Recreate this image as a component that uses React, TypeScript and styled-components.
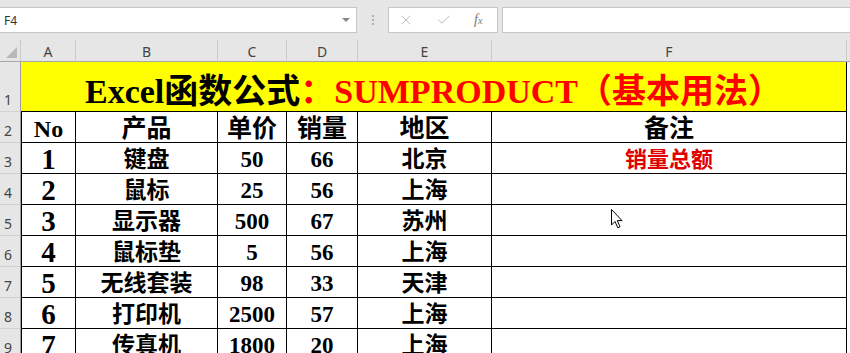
import React from 'react';
import styled, { createGlobalStyle } from 'styled-components';
import { X, Check } from 'lucide-react';

const GlobalStyle = createGlobalStyle`
  html, body {
    margin: 0;
    padding: 0;
    background: #fff;
    overflow: hidden;
  }
`;

const SERIF = `"Liberation Serif", "Noto Sans CJK SC", serif`;
const UI = `"Noto Sans", "Noto Sans CJK SC", sans-serif`;
const COLS = '21px 55px 142px 69px 71px 134px 355px 1fr';

const Page = styled.div`
  width: 850px;
  height: 353px;
  overflow: hidden;
  position: relative;
  background: #fff;
`;

const FormulaBar = styled.div`
  display: flex;
  align-items: flex-start;
  height: 40px;
  padding-top: 7px;
  box-sizing: border-box;
  background: #e6e6e6;
`;

const NameBox = styled.div`
  width: 357px;
  height: 26px;
  box-sizing: border-box;
  background: #fff;
  border: 1px solid #c6c6c6;
  border-left: none;
  display: flex;
  align-items: center;
  justify-content: space-between;
  padding: 0 6px 0 4px;
  font: 12px ${UI};
  color: #333;
`;

const DropArrow = styled.span`
  width: 0;
  height: 0;
  border-left: 4px solid transparent;
  border-right: 4px solid transparent;
  border-top: 4px solid #888;
`;

const Grip = styled.div`
  width: 31px;
  height: 26px;
  display: flex;
  flex-direction: column;
  align-items: center;
  justify-content: center;
  gap: 2px;
`;

const Dot = styled.span`
  width: 2px;
  height: 2px;
  background: #b0b0b0;
`;

const FxBox = styled.div`
  width: 110px;
  height: 26px;
  box-sizing: border-box;
  background: #fff;
  border: 1px solid #c6c6c6;
  display: flex;
  align-items: center;
  gap: 22px;
  padding-left: 9px;
  color: #bdbdbd;
`;

const Fx = styled.span`
  font: italic 14px ${SERIF};
  color: #777;
  sub {
    font-size: 10px;
    vertical-align: baseline;
  }
`;

const FormulaInput = styled.div`
  flex: 1;
  height: 26px;
  margin-left: 4px;
  box-sizing: border-box;
  background: #fff;
  border: 1px solid #c6c6c6;
  border-right: none;
`;

const Sheet = styled.div`
  display: grid;
  grid-template-columns: ${COLS};
  grid-template-rows: 22px 50px;
  grid-auto-rows: 31px;
`;

const ColHead = styled.div`
  background: #e6e6e6;
  border-right: 1px solid #cacaca;
  border-bottom: 1px solid #a8a8a8;
  display: flex;
  align-items: center;
  justify-content: center;
  font: 14px ${UI};
  color: #444;
  padding-top: 1px;
`;

const Corner = styled(ColHead)`
  position: relative;
  &::after {
    content: '';
    position: absolute;
    right: 3px;
    bottom: 3px;
    border-left: 11px solid transparent;
    border-bottom: 11px solid #b8b8b8;
  }
`;

const RowHead = styled.div`
  background: #e6e6e6;
  border-right: 1px solid #9e9e9e;
  border-bottom: 1px solid #d2d2d2;
  display: flex;
  align-items: flex-end;
  padding: 0 0 2px 4px;
  font: 14px ${UI};
  color: #444;
`;

const Title = styled.div`
  grid-column: 2 / 8;
  background: #ffff00;
  border-bottom: 1px solid #000;
  border-right: 1px solid #000;
  display: flex;
  align-items: center;
  justify-content: center;
  padding-top: 4px;
  font: bold 34px ${SERIF};
  color: #000;
  white-space: nowrap;
`;

const Red = styled.span`
  color: #ff0000;
`;

const Cell = styled.div<{ $size: number; $color?: string; $first?: boolean }>`
  border-right: 1px solid #000;
  border-bottom: 1px solid #000;
  ${(p) => (p.$first ? 'border-left: 1px solid #000;' : '')}
  display: flex;
  align-items: center;
  justify-content: center;
  padding-top: 3px;
  font: bold ${(p) => p.$size}px/1 ${SERIF};
  color: ${(p) => p.$color || '#000'};
  white-space: nowrap;
  overflow: hidden;
`;

const Blank = styled.div<{ $gray?: boolean }>`
  background: ${(p) => (p.$gray ? '#e6e6e6' : '#fff')};
  ${(p) => (p.$gray ? 'border-bottom: 1px solid #a8a8a8;' : '')}
`;

const Pointer = styled.svg`
  position: absolute;
  left: 610px;
  top: 208px;
`;

const letters = ['A', 'B', 'C', 'D', 'E', 'F'];
const heads = ['No', '产品', '单价', '销量', '地区', '备注'];
const rows: [string, string, string, string, string, string][] = [
  ['1', '键盘', '50', '66', '北京', '销量总额'],
  ['2', '鼠标', '25', '56', '上海', ''],
  ['3', '显示器', '500', '67', '苏州', ''],
  ['4', '鼠标垫', '5', '56', '上海', ''],
  ['5', '无线套装', '98', '33', '天津', ''],
  ['6', '打印机', '2500', '57', '上海', ''],
  ['7', '传真机', '1800', '20', '上海', ''],
];

export default function App() {
  return (
    <Page>
      <GlobalStyle />
      <FormulaBar>
        <NameBox>
          F4
          <DropArrow />
        </NameBox>
        <Grip>
          <Dot />
          <Dot />
          <Dot />
        </Grip>
        <FxBox>
          <X size={16} strokeWidth={1.5} />
          <Check size={16} strokeWidth={1.5} />
          <Fx>
            f<sub>x</sub>
          </Fx>
        </FxBox>
        <FormulaInput />
      </FormulaBar>
      <Sheet>
        <Corner />
        {letters.map((l) => (
          <ColHead key={l}>{l}</ColHead>
        ))}
        <Blank $gray />

        <RowHead>1</RowHead>
        <Title>
          Excel函数公式<Red>：SUMPRODUCT（基本用法）</Red>
        </Title>
        <Blank />

        <RowHead>2</RowHead>
        {heads.map((h, i) => (
          <Cell key={h} $size={i === 0 ? 24 : 25} $first={i === 0}>
            {h}
          </Cell>
        ))}
        <Blank />

        {rows.map((r, ri) => (
          <React.Fragment key={ri}>
            <RowHead>{ri + 3}</RowHead>
            <Cell $size={29} $first>
              {r[0]}
            </Cell>
            <Cell $size={23}>{r[1]}</Cell>
            <Cell $size={23}>{r[2]}</Cell>
            <Cell $size={23}>{r[3]}</Cell>
            <Cell $size={23}>{r[4]}</Cell>
            <Cell $size={22} $color="#e00000">
              {r[5]}
            </Cell>
            <Blank />
          </React.Fragment>
        ))}
      </Sheet>
      <Pointer width="14" height="22" viewBox="0 0 14 22">
        <path
          d="M1.5 1.5 L1.5 17 L5 13.5 L7.8 19.8 L10 18.8 L7.3 12.6 L12 12.6 Z"
          fill="#fff"
          stroke="#000"
          strokeWidth="1"
          strokeLinejoin="miter"
        />
      </Pointer>
    </Page>
  );
}
